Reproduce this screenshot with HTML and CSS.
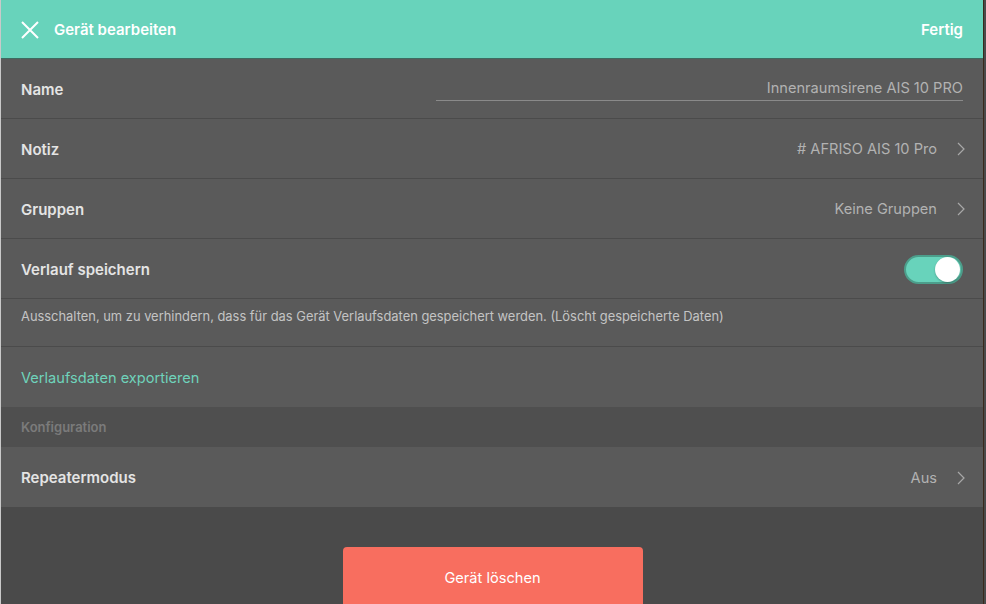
FILE: index.html
```html
<!DOCTYPE html>
<html lang="de">
<head>
  <meta charset="UTF-8">
  <meta name="viewport" content="width=device-width, initial-scale=1.0">
  <title>Gerät bearbeiten</title>
  <link rel="stylesheet" href="styles.css">
</head>
<body>

  <div class="window">
    <header class="topbar">
      <div class="topbar-left">
        <svg class="close-icon" width="18" height="18" viewBox="0 0 18 18">
          <path d="M1 1 L17 17 M17 1 L1 17" stroke="#ffffff" stroke-width="2" fill="none"/>
        </svg>
        <span class="title">Gerät bearbeiten</span>
      </div>
      <span class="done">Fertig</span>
    </header>

    <div class="list">
      <div class="row">
        <span class="label">Name</span>
        <div class="name-field">Innenraumsirene AIS 10 PRO</div>
      </div>

      <div class="row">
        <span class="label">Notiz</span>
        <div class="value">
          # AFRISO AIS 10 Pro
          <svg class="chevron" width="8" height="14" viewBox="0 0 8 14">
            <path d="M1 1 L7 7 L1 13" stroke="#a8a8a8" stroke-width="1.2" fill="none"/>
          </svg>
        </div>
      </div>

      <div class="row">
        <span class="label">Gruppen</span>
        <div class="value">
          Keine Gruppen
          <svg class="chevron" width="8" height="14" viewBox="0 0 8 14">
            <path d="M1 1 L7 7 L1 13" stroke="#a8a8a8" stroke-width="1.2" fill="none"/>
          </svg>
        </div>
      </div>

      <div class="row">
        <span class="label">Verlauf speichern</span>
        <div class="toggle"><div class="knob"></div></div>
      </div>

      <div class="row desc-row">
        <span class="desc">Ausschalten, um zu verhindern, dass für das Gerät Verlaufsdaten gespeichert werden. (Löscht gespeicherte Daten)</span>
      </div>

      <div class="row no-border">
        <span class="link">Verlaufsdaten exportieren</span>
      </div>

      <div class="section-head">Konfiguration</div>

      <div class="row no-border">
        <span class="label">Repeatermodus</span>
        <div class="value">
          Aus
          <svg class="chevron" width="8" height="14" viewBox="0 0 8 14">
            <path d="M1 1 L7 7 L1 13" stroke="#a8a8a8" stroke-width="1.2" fill="none"/>
          </svg>
        </div>
      </div>
    </div>

    <div class="footer">
      <button class="delete-btn">Gerät löschen</button>
    </div>
  </div>

</body>
</html>
```

FILE: styles.css
```css
body {
  margin: 0;
  font-family: Inter, Roboto, "Liberation Sans", Arial, sans-serif;
  background-color: #4a4a4a;
  height: 604px;
  overflow: hidden;
}

.window {
  width: 984px;
  height: 604px;
  border-left: 1px solid #c9c9c9;
  border-right: 1px solid #3a2a1c;
  box-sizing: border-box;
  background-color: #4a4a4a;
  display: flex;
  flex-direction: column;
}

.topbar {
  height: 58px;
  background-color: #68d3bb;
  border-bottom: 1px solid #3d6b60;
  display: flex;
  align-items: center;
  justify-content: space-between;
  padding: 0 20px;
  flex-shrink: 0;
}

.topbar-left {
  display: flex;
  align-items: center;
  gap: 15px;
}

.close-icon {
  margin-top: 1px;
}

.title,
.done {
  color: #ffffff;
  font-weight: 600;
  font-size: 15px;
}

.list {
  background-color: #5a5a5a;
}

.row {
  height: 59px;
  border-bottom: 1px solid #4b4b4b;
  display: flex;
  align-items: center;
  justify-content: space-between;
  padding: 1px 20px 0;
  box-sizing: border-box;
  height: 60px;
}

.row.no-border {
  border-bottom: none;
}

.label {
  color: #e4e4e4;
  font-weight: 600;
  font-size: 15px;
}

.name-field {
  width: 527px;
  text-align: right;
  color: #b2b2b2;
  font-size: 14.6px;
  padding-bottom: 3px;
  border-bottom: 1px solid #8a8a8a;
  margin-top: 1px;
}

.value {
  color: #b2b2b2;
  font-size: 14.6px;
  display: flex;
  align-items: center;
  gap: 20px;
}

.chevron {
  margin-right: -2px;
}

.toggle {
  width: 59px;
  height: 29px;
  box-sizing: border-box;
  border: 2px solid #4c9e8b;
  border-radius: 15px;
  background-color: #68d3bb;
  display: flex;
  align-items: center;
  justify-content: flex-end;
  padding-right: 1px;
}

.knob {
  width: 25px;
  height: 25px;
  border-radius: 50%;
  background-color: #ffffff;
  box-shadow: 0 1px 2px rgba(0, 0, 0, 0.25);
}

.desc-row {
  align-items: flex-start;
  padding-top: 10px;
  height: 48px;
}

.desc {
  color: #c4c4c4;
  font-size: 12.9px;
}

.link {
  color: #6fd3bb;
  font-size: 14.6px;
}

.section-head {
  height: 40px;
  background-color: #4f4f4f;
  color: #7b7b7b;
  font-size: 13px;
  font-weight: 600;
  display: flex;
  align-items: center;
  padding: 0 20px;
}

.footer {
  flex: 1;
  display: flex;
  justify-content: center;
  padding-top: 40px;
}

.delete-btn {
  width: 300px;
  height: 70px;
  background-color: #f86e5f;
  color: #ffffff;
  border: none;
  border-radius: 4px;
  font-family: Inter, Roboto, "Liberation Sans", Arial, sans-serif;
  font-size: 14.6px;
  padding-bottom: 10px;
  margin-left: 1px;
}
```
